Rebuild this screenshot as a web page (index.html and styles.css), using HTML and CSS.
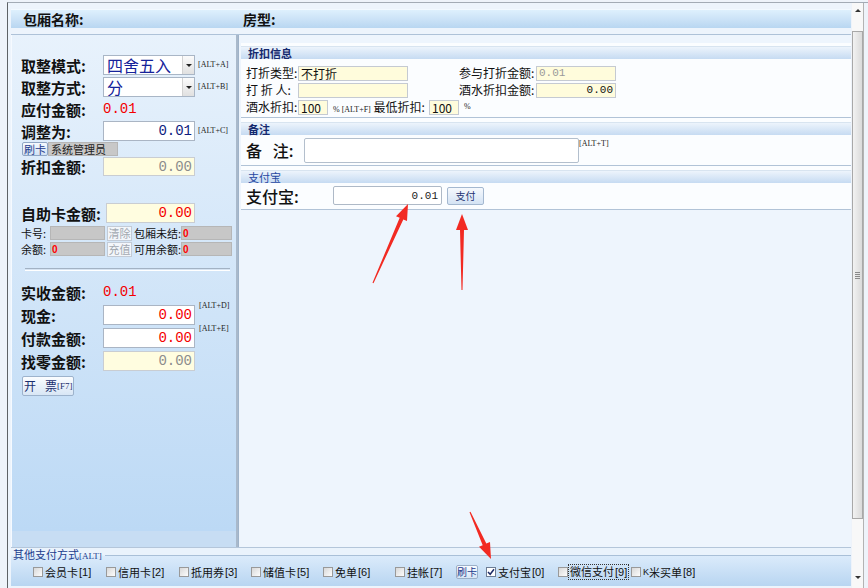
FILE: index.html
```html
<!DOCTYPE html>
<html lang="zh-CN">
<head>
<meta charset="utf-8">
<title>结账</title>
<link rel="stylesheet" href="styles.css">
</head>
<body>
<div class="window">
  <div class="content">
    <div class="titlebar">
      <span class="t-name">包厢名称:</span>
      <span class="t-type">房型:</span>
    </div>
    <div class="panels">
      <div class="left">
        <div class="lrow r-a">
          <span class="lbl">取整模式:</span>
          <div class="select"><span class="sel-val">四舍五入</span><span class="sel-btn"><i class="tri"></i></span></div>
          <span class="alt">[ALT+A]</span>
        </div>
        <div class="lrow r-b">
          <span class="lbl">取整方式:</span>
          <div class="select"><span class="sel-val">分</span><span class="sel-btn"><i class="tri"></i></span></div>
          <span class="alt">[ALT+B]</span>
        </div>
        <div class="lrow r-c">
          <span class="lbl">应付金额:</span>
          <span class="num red">0.01</span>
        </div>
        <div class="lrow r-d">
          <span class="lbl">调整为:</span>
          <div class="inp white"><span class="num navy">0.01</span></div>
          <span class="alt">[ALT+C]</span>
        </div>
        <div class="lrow r-e">
          <span class="sbtn">刷卡</span>
          <span class="oper">系统管理员</span>
        </div>
        <div class="lrow r-f">
          <span class="lbl">折扣金额:</span>
          <div class="inp yellow"><span class="num gray">0.00</span></div>
        </div>
        <div class="lrow r-g">
          <span class="lbl wide">自助卡金额:</span>
          <div class="inp yellow narrow"><span class="num red">0.00</span></div>
        </div>
        <div class="lrow small r-h">
          <span class="slbl">卡号:</span>
          <span class="gbox w55"></span>
          <span class="dbtn">清除</span>
          <span class="slbl mid">包厢未结:</span>
          <span class="gbox w51">0</span>
        </div>
        <div class="lrow small r-i">
          <span class="slbl">余额:</span>
          <span class="gbox w55">0</span>
          <span class="dbtn">充值</span>
          <span class="slbl mid">可用余额:</span>
          <span class="gbox w51">0</span>
        </div>
        <div class="sep"></div>
        <div class="lrow r-j">
          <span class="lbl">实收金额:</span>
          <span class="num red">0.01</span>
        </div>
        <div class="lrow r-k">
          <span class="lbl">现金:</span>
          <div class="inp white"><span class="num red">0.00</span></div>
          <span class="alt up3">[ALT+D]</span>
        </div>
        <div class="lrow r-l">
          <span class="lbl">付款金额:</span>
          <div class="inp white"><span class="num red">0.00</span></div>
          <span class="alt up3">[ALT+E]</span>
        </div>
        <div class="lrow r-m">
          <span class="lbl">找零金额:</span>
          <div class="inp yellow"><span class="num gray">0.00</span></div>
        </div>
        <div class="lrow r-n">
          <span class="kbtn">开<span class="kgap"></span>票<span class="alt nomargin">[F7]</span></span>
        </div>
      </div>

      <div class="right">
        <div class="sec">
          <div class="sec-h">折扣信息</div>
          <div class="sec1-body">
            <div class="rrow">
              <span class="rl">打折类型:</span>
              <span class="rin w110">不打折</span>
              <span class="rl2">参与打折金额:</span>
              <span class="rin w80 dim">0.01</span>
            </div>
            <div class="rrow">
              <span class="rl">打 折 人:</span>
              <span class="rin w110"></span>
              <span class="rl2">酒水折扣金额:</span>
              <span class="rin w80 rnum">0.00</span>
            </div>
            <div class="rrow">
              <span class="rl">酒水折扣:</span>
              <span class="rin w30">100</span>
              <span class="mid-txt"><span class="alt nomargin">%&nbsp;[ALT+F]</span>&nbsp;最低折扣:</span>
              <span class="rin w30">100</span>
              <span class="alt pct">%</span>
            </div>
          </div>
        </div>
        <div class="sec">
          <div class="sec-h">备注</div>
          <div class="sec2-body">
            <span class="big-lbl note-lbl">备&nbsp;&nbsp;&nbsp;注:</span>
            <span class="textarea"></span>
            <span class="alt nomargin top">[ALT+T]</span>
          </div>
        </div>
        <div class="sec">
          <div class="sec-h plain">支付宝</div>
          <div class="sec3-body">
            <span class="big-lbl pay-lbl">支付宝:</span>
            <span class="pay-inp">0.01</span>
            <span class="pay-btn">支付</span>
          </div>
        </div>
      </div>
    </div>

    <div class="other">
      <div class="other-head"><span class="legend">其他支付方式<span class="alt nomargin">[ALT]</span></span><span class="line"></span></div>
      <div class="other-row">
        <span class="cb w73"><i class="box"></i>会员卡<span class="key">[1]</span></span>
        <span class="cb w73"><i class="box"></i>信用卡<span class="key">[2]</span></span>
        <span class="cb w72"><i class="box"></i>抵用券<span class="key">[3]</span></span>
        <span class="cb w72"><i class="box"></i>储值卡<span class="key">[5]</span></span>
        <span class="cb w72"><i class="box"></i>免单<span class="key">[6]</span></span>
        <span class="cb w61"><i class="box"></i>挂帐<span class="key">[7]</span></span>
        <span class="card-btn">刷卡</span>
        <span class="cb w72"><i class="box checked"><svg width="8" height="8" viewBox="0 0 8 8"><path d="M1 4 L3.2 6.3 L7 1.3" fill="none" stroke="#1d2b66" stroke-width="1.5"/></svg></i>支付宝<span class="key">[0]</span></span>
        <span class="cb w73"><i class="box"></i><span class="focus">微信支付<span class="key">[9]</span></span></span>
        <span class="cb"><i class="box"></i><span class="kk">K</span>米买单<span class="key">[8]</span></span>
      </div>
    </div>
  </div>

  <div class="scroll">
    <i class="arr-up"></i>
    <div class="thumb"><span class="grip"></span></div>
    <i class="arr-down"></i>
  </div>
</div>

<svg class="arrows" width="868" height="588" viewBox="0 0 868 588">
  <polygon points="372.5,282.8 399.7,217.8 396.0,216.2 408,204 407.0,221.0 403.3,219.4 373.5,283.2" fill="#f22a22"/>
  <polygon points="461.5,290 460,230 456,230 462,214 468,230 464,230 462.5,290" fill="#f22a22"/>
  <polygon points="469.5,512.2 482.7,545.2 479.0,546.8 491,559 490.0,542.0 486.3,543.6 470.5,511.8" fill="#f22a22"/>
</svg>
</body>
</html>
```

FILE: styles.css
```css
* { box-sizing: border-box; }
html, body { margin: 0; padding: 0; }
body {
  width: 868px;
  height: 588px;
  overflow: hidden;
  position: relative;
  background: #eef3fa;
  font-family: "Noto Sans CJK SC", "Noto Sans", sans-serif;
  color: #111;
}

.window {
  margin-top: 2px;
  margin-left: 7px;
  height: 586px;
  display: flex;
  border-top: 1px solid #a3abb5;
  border-left: 1px solid #5e6266;
}

.content {
  width: 843px;
  flex: none;
  display: flex;
  flex-direction: column;
  padding: 6px 0 0 3px;
  background: #edf4fc;
}

.titlebar {
  height: 19px;
  flex: none;
  display: flex;
  align-items: center;
  padding-left: 12px;
  margin-bottom: 6px;
  background: linear-gradient(#def0fd, #cce3f7 50%, #b8d6f1);
  border-top: 1px solid #f2f9ff;
  font-size: 14px;
  font-weight: 700;
  line-height: 1;
}
.t-name { width: 220px; }

.panels {
  height: 513px;
  flex: none;
  display: flex;
  border-top: 1px solid #aec2d8;
}

/* ---------- left panel ---------- */
.left {
  width: 227px;
  flex: none;
  display: flex;
  flex-direction: column;
  padding-left: 9px;
  border-left: 1px solid #f6faff;
  border-right: 2px solid #a9b9cb;
  background: linear-gradient(#e8f2fc, #bcd9f5 496px, #c7ddf3 496px);
}
.lrow { display: flex; align-items: center; flex: none; height: 20px; }
.lbl { width: 82px; flex: none; font-size: 15px; font-weight: 700; white-space: nowrap; line-height: 1; }
.lbl.wide { width: 85px; }

.r-a { margin-top: 20px; }
.r-b { margin-top: 2px; }
.r-c { margin-top: 2px; }
.r-d { margin-top: 2px; }
.r-e { margin-top: 1px; height: 14px; }
.r-f { margin-top: 1px; height: 19px; }
.r-g { margin-top: 27px; }
.r-h { margin-top: 3px; }
.r-i { margin-top: 2px; }
.r-j { margin-top: 12px; height: 18px; }
.r-k { margin-top: 4px; }
.r-l { margin-top: 3px; }
.r-m { margin-top: 3px; }
.r-n { margin-top: 5px; }

.select {
  width: 92px;
  height: 20px;
  display: flex;
  border: 1px solid #a9b6c6;
  background: #fff;
}
.sel-val { flex: 1; font-size: 16px; line-height: 18px; color: #15229a; padding-left: 3px; }
.sel-btn {
  width: 12px;
  display: flex;
  align-items: center;
  justify-content: center;
  background: linear-gradient(#fbfbfb, #e0e0e0);
  border-left: 1px solid #d2d2d2;
}
.tri {
  width: 0; height: 0;
  border-left: 3px solid transparent;
  border-right: 3px solid transparent;
  border-top: 3px solid #222;
}
.alt {
  font-family: "Liberation Serif", serif;
  font-size: 8px;
  color: #222;
  margin-left: 3px;
  white-space: nowrap;
  line-height: 1;
}
.alt.nomargin { margin-left: 0; }
.alt.up3 { align-self: flex-start; margin-top: -3px; margin-left: 4px; }

.inp {
  width: 92px;
  height: 20px;
  display: flex;
  align-items: center;
  justify-content: flex-end;
  padding-right: 2px;
  border: 1px solid #aab5c4;
}
.r-f .inp { height: 19px; }
.white { background: #fff; }
.yellow { background: #fffde0; border-color: #c9cdd2; }
.narrow { width: 89px; }
.num { font-family: "Liberation Mono", monospace; font-size: 14px; line-height: 1; }
.red { color: #f40000; }
.navy { color: #0e1c7e; }
.gray { color: #8c8c8c; }

.sbtn {
  width: 26px;
  height: 14px;
  margin-left: 1px;
  display: flex;
  align-items: center;
  justify-content: center;
  font-size: 11px;
  color: #1c3a8c;
  border: 1px solid #8fa6c4;
  border-radius: 2px;
  background: linear-gradient(#f6f9fd, #d2e2f4);
}
.oper {
  width: 70px;
  height: 14px;
  display: flex;
  align-items: center;
  padding-left: 2px;
  font-size: 11px;
  color: #222;
  background: #c8c8c8;
  border: 1px solid #b6b6b6;
}

.lrow.small { height: 14px; }
.slbl { width: 29px; flex: none; font-size: 11px; white-space: nowrap; line-height: 1; }
.slbl.mid { width: 47px; margin-left: 2px; }
.gbox {
  height: 14px;
  display: flex;
  align-items: center;
  padding-left: 1px;
  font-family: "Liberation Sans", sans-serif;
  font-size: 10px;
  font-weight: 700;
  color: #f00;
  background: #c7c7c7;
  border: 1px solid #b6b6b6;
}
.w55 { width: 55px; margin-right: 2px; }
.w51 { width: 51px; }
.dbtn {
  width: 25px;
  height: 15px;
  display: flex;
  align-items: center;
  justify-content: center;
  font-size: 11px;
  color: #a2a8b0;
  border: 1px solid #c3cbd6;
  background: #f3f6fa;
}

.sep {
  width: 205px;
  height: 3px;
  margin: 12px 0 0 4px;
  flex: none;
  background: #d5e3f2;
  border-top: 1px solid #a2b2c4;
  border-bottom: 1px solid #fff;
}

.kbtn {
  width: 52px;
  height: 20px;
  margin-left: 1px;
  display: flex;
  align-items: center;
  padding-left: 1px;
  font-size: 12px;
  line-height: 1;
  color: #1a2e6e;
  border: 1px solid #9db3cc;
  border-radius: 2px;
  background: linear-gradient(#fbfdff, #d8e6f5);
}
.kgap { width: 9px; }
.kbtn .alt { font-size: 9px; color: #1a2e6e; }

/* ---------- right panel ---------- */
.right {
  flex: 1;
  display: flex;
  flex-direction: column;
  padding: 8px 0 0 2px;
  border-left: 1px solid #9fb3c9;
  background: #eef5fd;
}
.sec {
  background: #fbfdff;
  border-bottom: 1px solid #b1c3d7;
  padding-top: 3px;
}
.sec + .sec { padding-top: 4px; }
.sec-h {
  height: 13px;
  padding-left: 7px;
  font-size: 11px;
  font-weight: 700;
  line-height: 13px;
  color: #15296e;
  background: linear-gradient(#edf4fc, #c6dbf2);
  border-top: 1px solid #d8e4f0;
}
.sec-h.plain { font-weight: 400; color: #2748a2; }

.sec1-body { padding: 6px 0 2px 5px; display: flex; flex-direction: column; gap: 1px; }
.rrow { display: flex; align-items: center; height: 16px; font-size: 12px; }
.rl { width: 52px; flex: none; white-space: nowrap; line-height: 1; }
.rl2 { width: 77px; flex: none; margin-left: 51px; white-space: nowrap; line-height: 1; }
.rin {
  height: 15px;
  flex: none;
  padding-left: 2px;
  font-size: 12px;
  line-height: 13px;
  border: 1px solid #c5cad2;
  background: #fffcdc;
  white-space: nowrap;
}
.w110 { width: 110px; }
.w80 { width: 80px; }
.w30 { width: 30px; }
.dim { color: #9a9a9a; font-family: "Liberation Mono", monospace; font-size: 11px; }
.rnum { text-align: right; padding-right: 2px; font-family: "Liberation Mono", monospace; font-size: 11px; }
.mid-txt { width: 96px; margin-left: 5px; white-space: nowrap; line-height: 1; }
.pct { margin-left: 5px; }

.sec2-body { display: flex; align-items: flex-start; padding: 3px 0 2px 5px; height: 30px; }
.big-lbl { font-size: 16px; font-weight: 500; line-height: 1; white-space: nowrap; }
.note-lbl { width: 58px; margin-top: 4px; }
.textarea { width: 275px; height: 25px; background: #fff; border: 1px solid #b3bfcd; border-radius: 2px; }
.alt.top { margin-top: 2px; }

.sec3-body { display: flex; align-items: center; padding: 3px 0 4px 5px; height: 26px; }
.pay-lbl { width: 87px; }
.pay-inp {
  width: 109px;
  height: 19px;
  display: flex;
  align-items: center;
  justify-content: flex-end;
  padding-right: 3px;
  font-family: "Liberation Mono", monospace;
  font-size: 11px;
  color: #222;
  background: #fff;
  border: 1px solid #aeb9c7;
  border-radius: 2px;
}
.pay-btn {
  width: 37px;
  height: 18px;
  margin-left: 5px;
  display: flex;
  align-items: center;
  justify-content: center;
  font-size: 10px;
  color: #1d3372;
  border: 1px solid #a4b8d0;
  border-radius: 2px;
  background: linear-gradient(#f6f9fd, #d4e3f4);
}

/* ---------- bottom ---------- */
.other {
  height: 39px;
  flex: none;
  border-top: 1px solid #b4c6da;
  background: linear-gradient(#eaf3fc 0, #eaf3fc 7px, #dbebfb 8px, #b8d5f1 100%);
}
.other-head { height: 14px; display: flex; align-items: center; padding-left: 2px; }
.legend { font-size: 11px; line-height: 1; color: #1b3c8e; white-space: nowrap; }
.legend .alt { color: #1b3c8e; font-size: 9px; }
.line { flex: 1; height: 1px; margin-left: 3px; background: #a9c0d8; }
.other-row { height: 20px; display: flex; align-items: center; padding-left: 22px; font-size: 11px; line-height: 1; }
.cb { display: flex; align-items: center; flex: none; white-space: nowrap; }
.w73 { width: 73px; }
.w72 { width: 72px; }
.w61 { width: 61px; }
.box {
  width: 10px;
  height: 10px;
  margin-right: 2px;
  display: flex;
  align-items: center;
  justify-content: center;
  border: 1px solid #999;
  background: linear-gradient(135deg, #d8d8d8, #fdfdfd);
}
.box.checked { background: #fff; border-color: #6c7c94; }
.key { font-family: "Liberation Sans", sans-serif; font-size: 11px; margin-left: 1px; }
.focus { outline: 1px dotted #333; outline-offset: 1px; }
.kk { font-family: "Liberation Sans", sans-serif; font-size: 9px; }
.card-btn {
  width: 22px;
  height: 14px;
  margin-right: 8px;
  display: flex;
  align-items: center;
  justify-content: center;
  font-size: 10px;
  color: #1c3a8c;
  border: 1px solid #9cb0c8;
  border-radius: 2px;
  background: linear-gradient(#f8fbff, #d8e6f5);
}

/* ---------- scrollbar ---------- */
.scroll {
  width: 12px;
  flex: none;
  margin-left: 1px;
  display: flex;
  flex-direction: column;
  align-items: center;
  background: #f8f8f8;
  border-right: 1px solid #b3b3b3;
}
.arr-up {
  width: 0; height: 0;
  margin-top: 6px;
  margin-bottom: 19px;
  border-left: 3px solid transparent;
  border-right: 3px solid transparent;
  border-bottom: 3px solid #333;
}
.thumb {
  width: 11px;
  height: 488px;
  display: flex;
  align-items: center;
  justify-content: center;
  border: 1px solid #a8a8a8;
  background: linear-gradient(to right, #f2f2f2, #dadada);
}
.grip {
  width: 5px;
  height: 7px;
  background: repeating-linear-gradient(#8a8a8a 0 1px, transparent 1px 2px);
}
.arr-down {
  width: 0; height: 0;
  margin-top: 57px;
  border-left: 3px solid transparent;
  border-right: 3px solid transparent;
  border-top: 3px solid #333;
}

.arrows { position: absolute; left: 0; top: 0; pointer-events: none; }
```
